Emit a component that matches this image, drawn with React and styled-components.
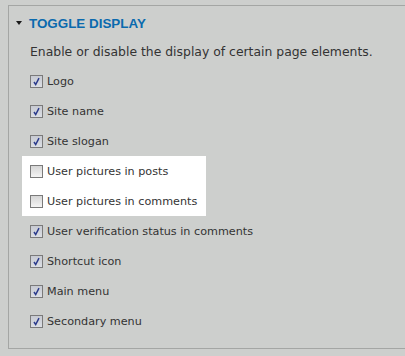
import React from "react";
import styled, { createGlobalStyle } from "styled-components";

const GlobalStyle = createGlobalStyle`
    html, body {
        margin: 0;
        padding: 0;
        background: #cdcfcd;
        overflow: hidden;
    }
    body {
        font-family: "DejaVu Sans", Verdana, sans-serif;
    }
`;

const Page = styled.div`
    width: 405px;
    height: 356px;
    padding: 5px 0 0 8px;
    box-sizing: border-box;
    overflow: hidden;
`;

const Fieldset = styled.section`
    width: 440px;
    height: 344px;
    box-sizing: border-box;
    border: 1px solid #a4a6a4;
    padding: 9px 0 0 7px;
`;

const Header = styled.div`
    display: flex;
    align-items: center;
    gap: 7px;
    height: 16px;
`;

const Arrow = styled.span`
    width: 0;
    height: 0;
    border-left: 3.5px solid transparent;
    border-right: 3.5px solid transparent;
    border-top: 4px solid #1a1a1a;
`;

const Title = styled.h2`
    margin: 0;
    font-family: "Liberation Sans", Arial, sans-serif;
    font-size: 13.4px;
    font-weight: bold;
    color: #0a6aae;
    text-transform: uppercase;
`;

const Body = styled.div`
    padding: 13px 0 0 14px;
`;

const Description = styled.p`
    margin: 0 0 6px 0;
    font-size: 12.4px;
    color: #333;
    line-height: 16px;
`;

const Highlight = styled.div`
    background: #fff;
    margin-left: -8px;
    padding-left: 8px;
    width: 184px;
    box-sizing: border-box;
`;

const Row = styled.label`
    display: flex;
    align-items: center;
    gap: 4px;
    height: 30px;
    font-size: 11.2px;
    color: #333;
    white-space: nowrap;
`;

const Box = styled.span`
    flex-shrink: 0;
    width: 11px;
    height: 11px;
    border: 1px solid #7a7a7a;
    background: ${(p) =>
        p.$checked
            ? "linear-gradient(#c6c9d1, #dcdfe4)"
            : "linear-gradient(#d6d6d6, #f4f4f4)"};
    display: flex;
    align-items: center;
    justify-content: center;
`;

const Check = ({ on }) => (
    <Box $checked={on}>
        {on && (
            <svg width="9" height="9" viewBox="0 0 9 9">
                <path d="M2 5 L3.7 7.5 L7 1.2" stroke="#2b3b8c" strokeWidth="1.5" fill="none" />
            </svg>
        )}
    </Box>
);

const Item = ({ label, on }) => (
    <Row>
        <Check on={on} />
        {label}
    </Row>
);

export default function App() {
    return (
        <Page>
            <GlobalStyle />
            <Fieldset>
                <Header>
                    <Arrow />
                    <Title>Toggle display</Title>
                </Header>
                <Body>
                    <Description>Enable or disable the display of certain page elements.</Description>
                    <Item label="Logo" on />
                    <Item label="Site name" on />
                    <Item label="Site slogan" on />
                    <Highlight>
                        <Item label="User pictures in posts" />
                        <Item label="User pictures in comments" />
                    </Highlight>
                    <Item label="User verification status in comments" on />
                    <Item label="Shortcut icon" on />
                    <Item label="Main menu" on />
                    <Item label="Secondary menu" on />
                </Body>
            </Fieldset>
        </Page>
    );
}
